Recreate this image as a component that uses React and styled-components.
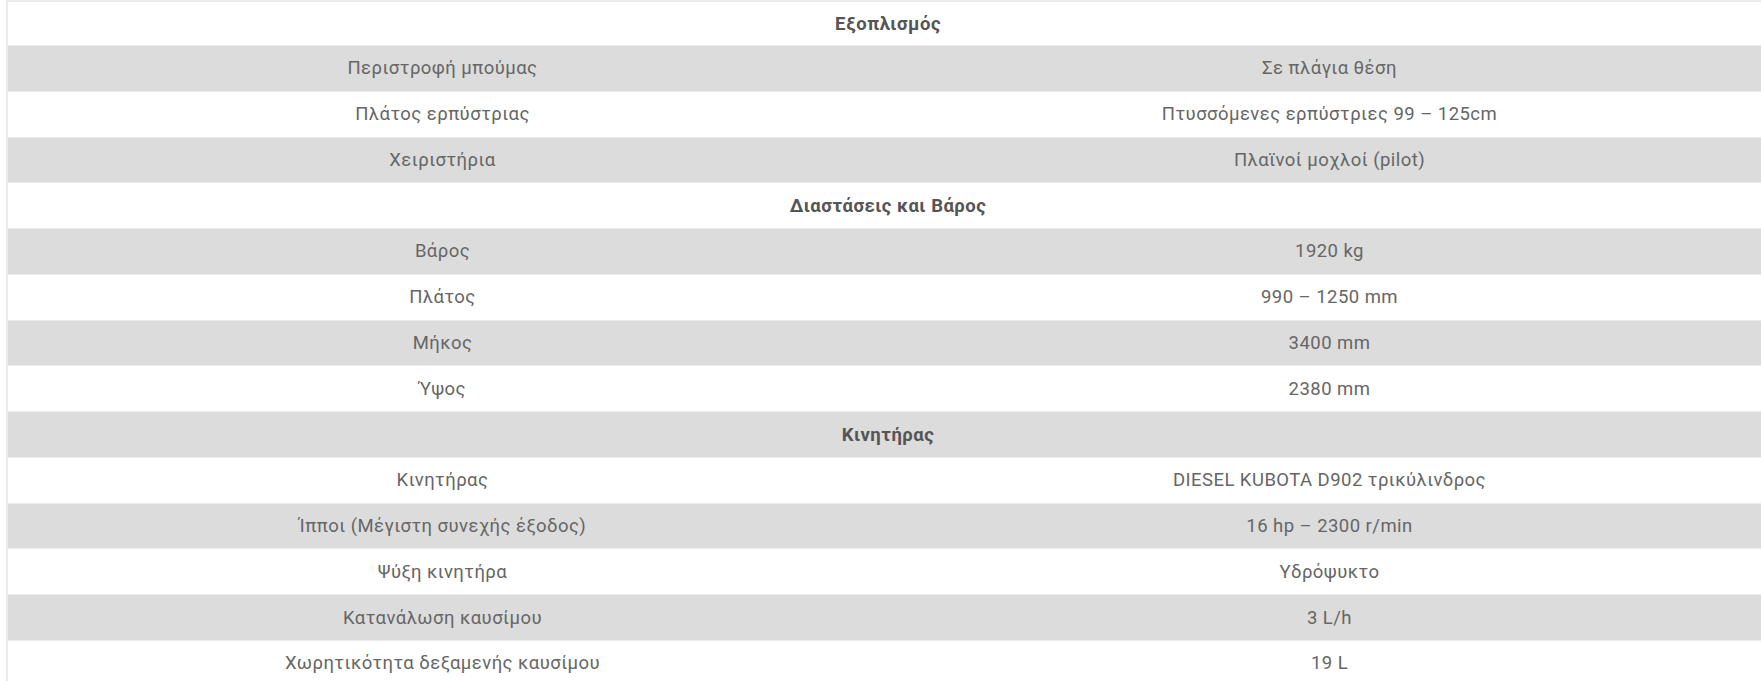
import React from "react";
import styled, { createGlobalStyle } from "styled-components";

const Global = createGlobalStyle`
  html, body {
    margin: 0;
    padding: 0;
    background: #ffffff;
    overflow: hidden;
  }
  body {
    font-family: Roboto, "Noto Sans", sans-serif;
  }
`;

const Page = styled.div`
  padding-left: 6px;
  width: 1790px;
`;

const Table = styled.div`
  width: 1774px;
  border-left: 2px solid #ebebeb;
  border-top: 2px solid #ebebeb;
  border-right: 1px solid #ebebeb;
`;

const Row = styled.div`
  display: grid;
  grid-template-columns: 878px 1fr;
  height: 45.77px;
  box-sizing: border-box;
  border-bottom: 1px solid #ebebeb;
  background: ${(p) => (p.$shaded ? "#dcdcdc" : "#ffffff")};

  &:first-child {
    height: 44px;
  }
`;

const Cell = styled.div`
  display: flex;
  align-items: center;
  justify-content: center;
  padding-right: 9px;
  font-size: 18.5px;
  letter-spacing: 0.45px;
  color: #666666;
  white-space: nowrap;
`;

const HeadCell = styled(Cell)`
  grid-column: 1 / -1;
  font-weight: 700;
  letter-spacing: 0.5px;
  color: #555555;
  padding-right: 14px;
`;

const sections = [
  {
    title: "Εξοπλισμός",
    rows: [
      ["Περιστροφή μπούμας", "Σε πλάγια θέση"],
      ["Πλάτος ερπύστριας", "Πτυσσόμενες ερπύστριες 99 – 125cm"],
      ["Χειριστήρια", "Πλαϊνοί μοχλοί (pilot)"],
    ],
  },
  {
    title: "Διαστάσεις και Βάρος",
    rows: [
      ["Βάρος", "1920 kg"],
      ["Πλάτος", "990 – 1250 mm"],
      ["Μήκος", "3400 mm"],
      ["Ύψος", "2380 mm"],
    ],
  },
  {
    title: "Κινητήρας",
    rows: [
      ["Κινητήρας", "DIESEL KUBOTA D902 τρικύλινδρος"],
      ["Ίπποι (Μέγιστη συνεχής έξοδος)", "16 hp – 2300 r/min"],
      ["Ψύξη κινητήρα", "Υδρόψυκτο"],
      ["Κατανάλωση καυσίμου", "3 L/h"],
      ["Χωρητικότητα δεξαμενής καυσίμου", "19 L"],
    ],
  },
];

export default function App() {
  let i = 0;
  const rows = [];
  sections.forEach((s) => {
    rows.push(
      <Row key={"h" + s.title} $shaded={i++ % 2 === 1}>
        <HeadCell>{s.title}</HeadCell>
      </Row>
    );
    s.rows.forEach(([k, v]) => {
      rows.push(
        <Row key={k + v} $shaded={i++ % 2 === 1}>
          <Cell>{k}</Cell>
          <Cell>{v}</Cell>
        </Row>
      );
    });
  });

  return (
    <>
      <Global />
      <Page>
        <Table>{rows}</Table>
      </Page>
    </>
  );
}
